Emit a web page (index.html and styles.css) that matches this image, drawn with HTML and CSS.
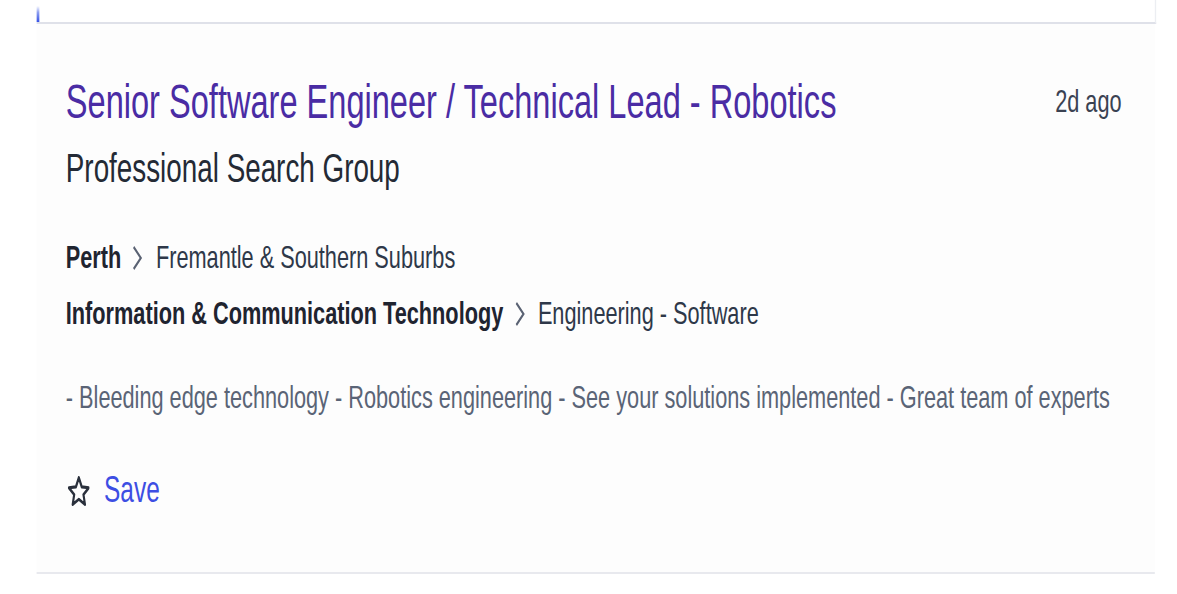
FILE: index.html
```html
<!DOCTYPE html>
<html lang="en">
<head>
<meta charset="utf-8">
<title>Job listing</title>
<link rel="stylesheet" href="styles.css">
</head>
<body>
<div class="stage">
  <div class="prev-card"><span class="prev-accent"></span></div>
  <article class="card">
    <div class="card-head">
      <div class="head-main">
        <h3 class="title"><a href="#">Senior Software Engineer / Technical Lead - Robotics</a></h3>
        <div class="company">Professional Search Group</div>
      </div>
      <div class="date">2d ago</div>
    </div>
    <div class="crumbs">
      <div class="crumb"><strong>Perth</strong><svg class="chev" viewBox="0 0 12 16" aria-hidden="true"><path d="M3.5 2.5 L8.8 8 L3.5 13.5" fill="none" stroke="currentColor" stroke-width="1.3"/></svg><span>Fremantle &amp; Southern Suburbs</span></div>
      <div class="crumb"><strong>Information &amp; Communication Technology</strong><svg class="chev" viewBox="0 0 12 16" aria-hidden="true"><path d="M3.5 2.5 L8.8 8 L3.5 13.5" fill="none" stroke="currentColor" stroke-width="1.3"/></svg><span>Engineering - Software</span></div>
    </div>
    <p class="desc">- Bleeding edge technology - Robotics engineering - See your solutions implemented - Great team of experts</p>
    <div class="save"><svg class="star" viewBox="1.8 1.8 20.4 19.6" preserveAspectRatio="none" aria-hidden="true"><path d="M12 2.8 L14.7 8.9 L21.2 9.5 L16.3 13.9 L17.7 20.4 L12 17 L6.3 20.4 L7.7 13.9 L2.8 9.5 L9.3 8.9 Z" fill="none" stroke="currentColor" stroke-width="2" stroke-linejoin="round"/></svg><a href="#">Save</a></div>
  </article>
</div>
</body>
</html>
```

FILE: styles.css
```css
html {
  overflow: hidden;
}

body {
  margin: 0;
  padding: 0;
  background: #ffffff;
  min-height: 594px;
}

.stage {
  width: 867px;
  transform: scale(1.357, 2);
  transform-origin: 0 0;
  font-family: "Liberation Sans", Arial, sans-serif;
  color: #2e3849;
}

.prev-card {
  position: relative;
  margin-left: 26.5px;
  width: 824px;
  height: 11px;
  background: #ffffff;
  border-bottom: 1px solid #dfe1e9;
  border-right: 1px solid #eceef2;
}

.prev-accent {
  position: absolute;
  left: 0;
  top: 2.5px;
  bottom: 0;
  width: 2.2px;
  background: linear-gradient(#ffffff, #8fa0f0 40%, #3551e6);
}

.card {
  margin-left: 26.5px;
  width: 824px;
  box-sizing: border-box;
  padding: 22.5px 24px 29px 22px;
  background: #fdfdfd;
  border-bottom: 1px solid #e8e9ee;
}

.card-head {
  display: flex;
  justify-content: space-between;
  align-items: flex-start;
}

.title {
  margin: 0;
  font-size: 24px;
  line-height: 32px;
  font-weight: normal;
}

.title a {
  color: #4a2ca4;
  text-decoration: none;
}

.company {
  margin-top: 3.6px;
  font-size: 20.5px;
  line-height: 28px;
  color: #242a35;
}

.date {
  margin-top: 4px;
  font-size: 16px;
  line-height: 24px;
  color: #3a4252;
}

.crumbs {
  margin-top: 19.1px;
  display: flex;
  flex-direction: column;
  gap: 3.4px;
}

.crumb {
  display: flex;
  align-items: center;
  font-size: 16px;
  line-height: 24px;
  color: #2e3849;
}

.crumb strong {
  font-weight: bold;
  color: #1f2430;
}

.chev {
  width: 12px;
  height: 16px;
  margin: 0 7.5px 0 6px;
  color: #5a6273;
}

.desc {
  margin: 18.7px 0 0;
  font-size: 16px;
  line-height: 24px;
  color: #5a6476;
}

.save {
  margin-top: 21.8px;
  display: flex;
  align-items: center;
  gap: 11px;
  font-size: 18px;
  line-height: 24px;
}

.star {
  width: 16.2px;
  height: 15px;
  margin-left: 1px;
  color: #2a303c;
}

.save a {
  color: #3d4ee3;
  text-decoration: none;
}
```
